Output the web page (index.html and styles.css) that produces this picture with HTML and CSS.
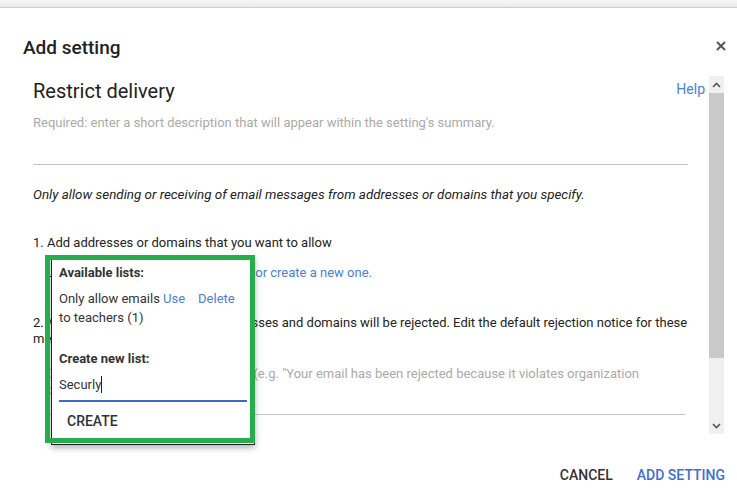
FILE: index.html
```html
<!DOCTYPE html>
<html lang="en">

<head>
    <meta charset="UTF-8">
    <meta name="viewport" content="width=device-width, initial-scale=1.0">
    <title>Add setting</title>
    <link rel="stylesheet" href="styles.css">
</head>

<body>
<div class="topbar"></div>

<div class="dialog">
    <div class="dialog-head">
        <h1>Add setting</h1>
        <span class="close">
            <svg width="10" height="10" viewBox="0 0 10 10">
                <path d="M1 1 L9 9 M9 1 L1 9" stroke="#555" stroke-width="2" fill="none"/>
            </svg>
        </span>
    </div>

    <div class="dialog-body">
        <div class="scroll-content">
            <div class="title-row">
                <h2>Restrict delivery</h2>
                <a class="link help">Help</a>
            </div>
            <div class="summary">Required: enter a short description that will appear within the setting's summary.</div>

            <p class="intro">Only allow sending or receiving of email messages from addresses or domains that you specify.</p>

            <p class="step">1. Add addresses or domains that you want to allow</p>
            <p class="step-sub"><span class="list-select">Use existing list</span> <a class="link">or create a new one.</a></p>

            <p class="step step-2">2. Messages from all other mail addresses and domains will be rejected. Edit the default rejection notice for these messages if needed.</p>
            <div class="notice">Optional: enter a rejection message (e.g. "Your email has been rejected because it violates organization policy")</div>
        </div>

        <div class="scrollbar">
            <div class="arrow">
                <svg width="9" height="6" viewBox="0 0 9 6"><path d="M1 5 L4.5 1.5 L8 5" stroke="#555" stroke-width="1.6" fill="none"/></svg>
            </div>
            <div class="thumb"></div>
            <div class="track"></div>
            <div class="arrow">
                <svg width="9" height="6" viewBox="0 0 9 6"><path d="M1 1 L4.5 4.5 L8 1" stroke="#555" stroke-width="1.6" fill="none"/></svg>
            </div>
        </div>
    </div>

    <div class="dialog-foot">
        <span class="btn">CANCEL</span>
        <span class="btn primary">ADD SETTING</span>
    </div>
</div>

<!-- popup menu of lists -->
<div class="popup">
    <div class="popup-label">Available lists:</div>
    <div class="list-item">
        <span class="list-name">Only allow emails to teachers (1)</span>
        <a class="link">Use</a>
        <a class="link">Delete</a>
    </div>
    <div class="popup-label new">Create new list:</div>
    <div class="new-input">Securly<span class="caret"></span></div>
    <div class="create">CREATE</div>
</div>

<!-- highlight drawn over the screenshot -->
<div class="marker"></div>
</body>

</html>
```

FILE: styles.css
```css
* {
    padding: 0;
    margin: 0;
    box-sizing: border-box;
}

body {
    font: 13px Roboto, "Liberation Sans", sans-serif;
    color: #222;
    background-color: #fff;
    width: 737px;
    height: 496px;
    overflow: hidden;
}

.topbar {
    height: 8px;
    background: linear-gradient(#f6f6f6, #ebebeb);
    border-bottom: 1px solid #cfcfcf;
}

.dialog-head {
    display: flex;
    justify-content: space-between;
    align-items: flex-start;
    height: 68px;
    padding: 28px 11px 0 23px;
}

.dialog-head h1 {
    font-size: 19px;
    font-weight: 500;
    line-height: 24px;
}

.close {
    padding-top: 5px;
    line-height: 0;
}

.dialog-body {
    display: flex;
    height: 358px;
    padding-left: 33px;
    overflow: hidden;
}

.scroll-content {
    width: 676px;
    padding-top: 3px;
}

.title-row {
    display: flex;
    justify-content: space-between;
    align-items: flex-start;
    padding-right: 4px;
}

.title-row h2 {
    font-size: 20px;
    font-weight: 400;
    line-height: 24px;
}

.link {
    color: #4a80d9;
    cursor: pointer;
}

.help {
    font-size: 14px;
    line-height: 16px;
    margin-top: 2px;
}

.summary {
    width: 655px;
    margin-top: 12px;
    padding-bottom: 33px;
    line-height: 16px;
    color: #aaa;
    border-bottom: 1px solid #c4c4c4;
}

p {
    line-height: 16px;
}

.intro {
    margin-top: 22px;
    font-size: 13.4px;
    font-style: italic;
}

.step {
    margin-top: 32px;
}

.step-sub {
    margin-top: 14px;
    padding-left: 13px;
}

.list-select {
    display: inline-block;
    width: 206px;
}

.step-2 {
    margin-top: 34px;
    width: 662px;
}

.notice {
    width: 639px;
    margin: 19px 0 0 13px;
    padding: 0 42px 16px 0;
    line-height: 16px;
    color: #aaa;
    border-bottom: 1px solid #c4c4c4;
}

.scrollbar {
    display: flex;
    flex-direction: column;
    width: 15px;
    background-color: #f0f0f0;
}

.arrow {
    height: 17px;
    display: flex;
    align-items: center;
    justify-content: center;
}

.thumb {
    height: 265px;
    background-color: #c9c9c9;
}

.track {
    flex: 1;
}

.dialog-foot {
    display: flex;
    justify-content: flex-end;
    gap: 24px;
    padding: 32px 12px 0 0;
}

.btn {
    font-size: 14px;
    font-weight: 500;
    line-height: 18px;
    color: #333;
}

.btn.primary {
    color: #3d6fd0;
}

/* popup */
.popup {
    position: absolute;
    left: 51px;
    top: 256px;
    width: 204px;
    height: 189px;
    padding: 8px 7px 0 7px;
    background-color: #fff;
    border: 1px solid #222;
    box-shadow: 0 3px 6px rgba(0, 0, 0, 0.3);
}

.popup-label {
    font-weight: 700;
    line-height: 16px;
    color: #333;
}

.popup-label.new {
    margin-top: 24px;
}

.list-item {
    display: flex;
    align-items: flex-start;
    margin-top: 8px;
    line-height: 19px;
    color: #333;
}

.list-name {
    width: 104px;
}

.list-item .link + .link {
    margin-left: 13px;
}

.new-input {
    margin-top: 9px;
    width: 188px;
    height: 26px;
    line-height: 16px;
    color: #333;
    border-bottom: 2px solid #3b69c6;
}

.caret {
    display: inline-block;
    width: 1px;
    height: 17px;
    vertical-align: -4px;
    background-color: #222;
}

.create {
    margin: 11px 0 0 8px;
    font-size: 14px;
    font-weight: 500;
    line-height: 16px;
    color: #333;
}

.marker {
    position: absolute;
    left: 45px;
    top: 255px;
    width: 210px;
    height: 188px;
    border: 5px solid #27ad4b;
}
```
